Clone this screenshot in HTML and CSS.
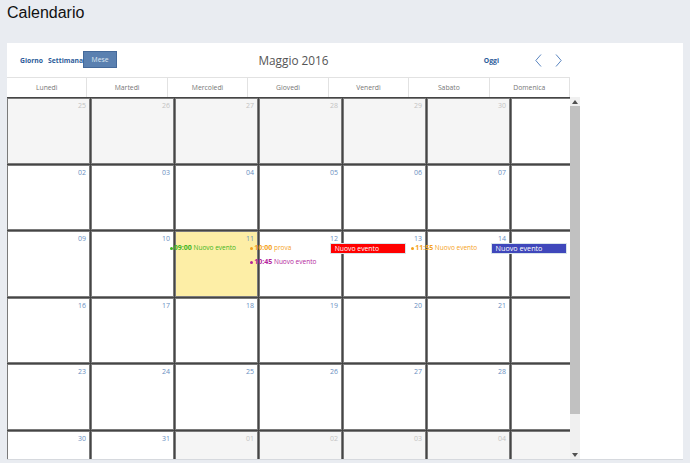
FILE: index.html
```html
<!DOCTYPE html>
<html lang="it">
<head>
    <meta charset="UTF-8">
    <title>Calendario</title>
    <link rel="stylesheet" href="styles.css">
</head>
<body>

    <h1 class="page-title">Calendario</h1>

    <div class="panel">
        <div class="calendar">
            <div class="toolbar">
                <div class="views">
                    <a class="view">Giorno</a>
                    <a class="view">Settimana</a>
                    <span class="view active">Mese</span>
                </div>
                <div class="month-title">Maggio 2016</div>
                <div class="nav">
                    <a class="today">Oggi</a>
                    <span class="arrow">
                        <svg width="7" height="13" viewBox="0 0 7 13"><path d="M6 0.5 L0.8 6.5 L6 12.5" fill="none" stroke="#5b86c0" stroke-width="1"/></svg>
                    </span>
                    <span class="arrow">
                        <svg width="7" height="13" viewBox="0 0 7 13"><path d="M1 0.5 L6.2 6.5 L1 12.5" fill="none" stroke="#5b86c0" stroke-width="1"/></svg>
                    </span>
                </div>
            </div>

            <div class="day-names">
                <div class="day-name">Lunedì</div>
                <div class="day-name">Martedì</div>
                <div class="day-name">Mercoledì</div>
                <div class="day-name">Giovedì</div>
                <div class="day-name">Venerdì</div>
                <div class="day-name">Sabato</div>
                <div class="day-name">Domenica</div>
            </div>

            <div class="body-wrap">
                <div class="weeks">
                    <div class="week">
                        <div class="cell other"><span class="num">25</span></div>
                        <div class="cell other"><span class="num">26</span></div>
                        <div class="cell other"><span class="num">27</span></div>
                        <div class="cell other"><span class="num">28</span></div>
                        <div class="cell other"><span class="num">29</span></div>
                        <div class="cell other"><span class="num">30</span></div>
                        <div class="cell"><span class="num">01</span></div>
                    </div>
                    <div class="week">
                        <div class="cell"><span class="num">02</span></div>
                        <div class="cell"><span class="num">03</span></div>
                        <div class="cell"><span class="num">04</span></div>
                        <div class="cell"><span class="num">05</span></div>
                        <div class="cell"><span class="num">06</span></div>
                        <div class="cell"><span class="num">07</span></div>
                        <div class="cell"><span class="num">08</span></div>
                    </div>
                    <div class="week">
                        <div class="cell"><span class="num">09</span></div>
                        <div class="cell"><span class="num">10</span></div>
                        <div class="cell today-cell"><span class="num">11</span></div>
                        <div class="cell"><span class="num">12</span></div>
                        <div class="cell"><span class="num">13</span></div>
                        <div class="cell"><span class="num">14</span></div>
                        <div class="cell"><span class="num">15</span></div>

                        <!-- events layer -->
                        <div class="events">
                            <div class="slot"></div>
                            <div class="slot"></div>
                            <div class="slot">
                                <div class="ev green"><i class="dot"></i><b>09:00</b> Nuovo evento</div>
                            </div>
                            <div class="slot">
                                <div class="ev orange"><i class="dot"></i><b>10:00</b> prova</div>
                                <div class="ev magenta"><i class="dot"></i><b>10:45</b> Nuovo evento</div>
                            </div>
                            <div class="slot">
                                <div class="bar red">Nuovo evento</div>
                            </div>
                            <div class="slot">
                                <div class="ev orange"><i class="dot"></i><b>11:55</b> Nuovo evento</div>
                            </div>
                            <div class="slot">
                                <div class="bar blue">Nuovo evento</div>
                            </div>
                        </div>
                    </div>
                    <div class="week">
                        <div class="cell"><span class="num">16</span></div>
                        <div class="cell"><span class="num">17</span></div>
                        <div class="cell"><span class="num">18</span></div>
                        <div class="cell"><span class="num">19</span></div>
                        <div class="cell"><span class="num">20</span></div>
                        <div class="cell"><span class="num">21</span></div>
                        <div class="cell"><span class="num">22</span></div>
                    </div>
                    <div class="week">
                        <div class="cell"><span class="num">23</span></div>
                        <div class="cell"><span class="num">24</span></div>
                        <div class="cell"><span class="num">25</span></div>
                        <div class="cell"><span class="num">26</span></div>
                        <div class="cell"><span class="num">27</span></div>
                        <div class="cell"><span class="num">28</span></div>
                        <div class="cell"><span class="num">29</span></div>
                    </div>
                    <div class="week">
                        <div class="cell"><span class="num">30</span></div>
                        <div class="cell"><span class="num">31</span></div>
                        <div class="cell other"><span class="num">01</span></div>
                        <div class="cell other"><span class="num">02</span></div>
                        <div class="cell other"><span class="num">03</span></div>
                        <div class="cell other"><span class="num">04</span></div>
                        <div class="cell other"><span class="num">05</span></div>
                    </div>
                </div>

                <div class="scrollbar">
                    <div class="sb-arrow">
                        <svg width="6" height="4" viewBox="0 0 6 4"><path d="M0 4 L3 0 L6 4 Z" fill="#505050"/></svg>
                    </div>
                    <div class="sb-track"><div class="sb-thumb"></div></div>
                    <div class="sb-arrow">
                        <svg width="6" height="4" viewBox="0 0 6 4"><path d="M0 0 L3 4 L6 0 Z" fill="#505050"/></svg>
                    </div>
                </div>
            </div>
        </div>
    </div>

</body>
</html>
```

FILE: styles.css
```css
body {
    margin: 0;
    background: #e9ecf1;
    font-family: "Open Sans", "Noto Sans", sans-serif;
    overflow: hidden;
}
.page-title {
    margin: 0;
    padding: 4px 7px 0;
    font-family: "Liberation Sans", Arial, sans-serif;
    font-size: 16px;
    font-weight: normal;
    line-height: 18px;
    color: #111;
}
.panel {
    margin: 21px 7px 0;
    height: 416px;
    background: #fff;
    border-bottom: 1px solid #d6d9de;
}
.calendar {
    width: 573px;
}
.toolbar {
    display: grid;
    grid-template-columns: 1fr auto 1fr;
    align-items: center;
    height: 34px;
}
.views {
    display: flex;
    align-items: center;
    padding-left: 13px;
}
.view {
    font-size: 6.8px;
    font-weight: bold;
    color: #2d5c9a;
    margin-right: 5px;
}
.view.active {
    margin: 0 0 1px -5px;
    width: 34px;
    height: 17px;
    line-height: 16px;
    box-sizing: border-box;
    text-align: center;
    font-weight: normal;
    color: #dfe7f1;
    background: #5a80b0;
    border: 1px solid #44699a;
}
.month-title {
    font-size: 11.8px;
    color: #555;
    padding-bottom: 1px;
}
.nav {
    display: flex;
    align-items: center;
    justify-content: flex-end;
    padding-right: 18px;
}
.today {
    font-size: 6.8px;
    font-weight: bold;
    color: #2d5c9a;
    margin-right: 36px;
}
.arrow {
    display: flex;
    margin-left: 13px;
}
.arrow:first-of-type {
    margin-left: 0;
}
.day-names {
    display: grid;
    grid-template-columns: repeat(7, minmax(0, 1fr));
    width: 563px;
    border-top: 1px solid #e2e2e2;
}
.day-name {
    height: 19px;
    line-height: 19px;
    text-align: center;
    font-size: 6.8px;
    color: #777;
    border-right: 1px solid #e2e2e2;
}
.body-wrap {
    display: flex;
    height: 362px;
}
.weeks {
    width: 563px;
    overflow: hidden;
    display: flex;
    flex-direction: column;
    gap: 1px;
    padding-top: 1px;
    box-sizing: border-box;
    background: #454545;
}
.week {
    position: relative;
    flex: none;
    display: grid;
    grid-template-columns: repeat(7, 83px);
    gap: 1px;
    height: 65.5px;
}
.cell {
    border: 1px solid #7a7a7a;
    background: #fff;
    text-align: right;
    padding: 2px 3px 0 0;
    font-size: 7px;
    line-height: 9px;
}
.cell.other {
    background: #f5f5f5;
}
.cell.today-cell {
    background: #fdeea6;
}
.num {
    color: #6a8fbf;
}
.cell.other .num {
    color: #c3c3c3;
}
.events {
    position: absolute;
    top: 11px;
    left: 0;
    width: 563px;
    display: grid;
    grid-template-columns: repeat(7, minmax(0, 1fr));
}
.slot {
    padding: 0 3px 0 1px;
}
.ev {
    font-size: 6.5px;
    line-height: 12px;
    white-space: nowrap;
    margin-left: 1px;
    margin-bottom: 2px;
}
.ev b {
    font-weight: bold;
    font-size: 7px;
}
.dot {
    display: inline-block;
    width: 3px;
    height: 3px;
    border-radius: 50%;
    margin-right: 1px;
    vertical-align: middle;
    background: currentColor;
}
.green { color: #3fb521; }
.orange { color: #f5a21c; }
.magenta { color: #b3249c; }
.bar {
    margin-top: 1px;
    height: 9px;
    line-height: 9px;
    font-size: 6.8px;
    color: #fff;
    padding-left: 4px;
    border: 1px solid #d8e4ea;
    white-space: nowrap;
}
.bar.red { background: #ff0000; }
.bar.blue { background: #3f47bb; font-size: 7.2px; }
.scrollbar {
    width: 10px;
    display: flex;
    flex-direction: column;
    background: #f0f0f0;
}
.sb-arrow {
    height: 9px;
    display: flex;
    align-items: center;
    justify-content: center;
}
.sb-track {
    flex: 1;
}
.sb-thumb {
    height: 308px;
    background: #c1c1c1;
}
```
